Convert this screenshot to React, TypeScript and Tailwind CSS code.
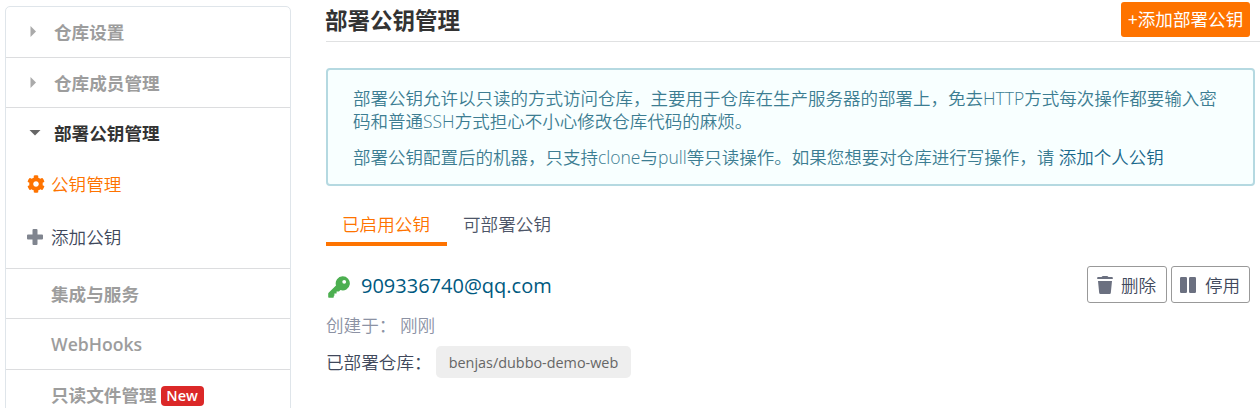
import type { ReactNode } from 'react';
import { FaCog } from 'react-icons/fa';

function KeyIcon() {
  return (
    <svg viewBox="0 0 22 22" className="h-[22px] w-[22px] shrink-0 fill-[#4caf50]">
      <path
        fillRule="evenodd"
        d="M14.6.2a7.100 7.100 0 1 1-2.200 13.800L11 15.400H8.600v2.200H6.400v2.200H5.800v1.200q0 .7-.7.7H.9a.7.7 0 0 1-.7-.7v-3.300c0-.4.1-.7.4-1l7.400-7.300A7.100 7.100 0 0 1 14.600.2ZM16.200 3.900a1.900 1.900 0 1 0 0 3.800 1.900 1.900 0 0 0 0-3.800Z"
      />
    </svg>
  );
}

function TrashIcon() {
  return (
    <svg viewBox="0 0 16 18" className="h-[18px] w-4 shrink-0 fill-[#6b7080]">
      <path d="M5.800 0h4.400q.5 0 .8.400l.4.600H15a.8.8 0 0 1 .8.8V3H.2V1.800A.8.8 0 0 1 1 1h3.600l.4-.6q.3-.4.8-.4ZM1 5h14l-1.200 12a1.200 1.200 0 0 1-1.200 1H3.400a1.200 1.200 0 0 1-1.200-1Z" />
    </svg>
  );
}

function PauseIcon() {
  return (
    <svg viewBox="0 0 16 16" className="h-4 w-4 shrink-0 fill-[#6b7080]">
      <rect x="0" y="0" width="7" height="16" rx="1.200" />
      <rect x="9" y="0" width="7" height="16" rx="1.200" />
    </svg>
  );
}

function PlusIcon() {
  return (
    <svg viewBox="0 0 16 16" className="mb-[2px] h-4 w-4 shrink-0 fill-[#80858f]">
      <path d="M6.500 0h3q1 0 1 1v4.500H15q1 0 1 1v3q0 1-1 1h-4.500V15q0 1-1 1h-3q-1 0-1-1v-4.500H1q-1 0-1-1v-3q0-1 1-1h4.500V1q0-1 1-1Z" />
    </svg>
  );
}

function Group({ label, open = false }: { label: string; open?: boolean }) {
  return (
    <div className={open ? 'flex h-[50px] items-center pl-[21px] font-semibold text-[#333]' : 'flex h-[50px] items-center pl-[21px] font-semibold text-[#9d9d9d]'}>
      <svg viewBox="0 0 12 12" className={open ? 'ml-[2px] mr-[13px] h-3 w-3 shrink-0' : 'mr-[15px] h-3 w-3 shrink-0'}>
        {open ? <path d="M.5 3h11L6 8.500Z" fill="#666" /> : <path d="M3.500 0v11L9 5.500Z" fill="#aaa" />}
      </svg>
      <span className="pt-px">{label}</span>
    </div>
  );
}

function Action({ icon, label, className }: { icon: ReactNode; label: string; className: string }) {
  return (
    <button className={`flex h-[37px] items-center rounded-[3px] border border-[#999] text-[#40485b] ${className}`}>
      {icon}
      <span className="pt-px">{label}</span>
    </button>
  );
}

export default function App() {
  return (
    <div className="flex h-[408px] overflow-hidden bg-white font-['Open_Sans','Noto_Sans_CJK_SC',sans-serif] text-[17.6px] leading-[23px]">
      <aside className="ml-[5px] mt-[6px] h-[420px] w-[286px] shrink-0 rounded-t-[5px] border border-[#dfe5ea]">
        <Group label="仓库设置" />
        <div className="h-[50px] border-t border-[#dcdddf]">
          <Group label="仓库成员管理" />
        </div>
        <div className="h-[161px] border-t border-[#dcdddf]">
          <Group label="部署公钥管理" open />
          <div className="flex h-[53px] items-center pl-[21px] font-[350] text-[#fe7300]">
            <FaCog className="mb-[2px] mr-[6px] h-[18px] w-[18px]" />
            公钥管理
          </div>
          <div className="flex h-[53px] items-center pl-[21px] font-[350] text-[#40485b]">
            <PlusIcon />
            <span className="ml-[8px]">添加公钥</span>
          </div>
        </div>
        <div className="flex h-[50px] items-center border-t border-[#dcdddf] pl-[45px] pt-px font-semibold text-[#9d9d9d]">集成与服务</div>
        <div className="flex h-[51px] items-center border-t border-[#dcdddf] pl-[45px] font-semibold text-[#9d9d9d]">WebHooks</div>
        <div className="flex h-[51px] items-center border-t border-[#dcdddf] pl-[45px] font-semibold text-[#9d9d9d]">
          只读文件管理
          <span className="ml-1 mt-px flex h-5 w-[43px] items-center justify-center rounded bg-[#db2828] text-[14.500px] text-white">New</span>
        </div>
      </aside>

      <main className="ml-[35px] min-w-0 flex-1">
        <header className="flex h-[42px] items-center justify-between border-b border-[#e0e1e2] pr-[10px]">
          <h1 className="ml-[-1px] text-[22.500px] font-bold text-[#333]">部署公钥管理</h1>
          <button className="mt-[-3px] h-[35px] w-[129px] whitespace-nowrap rounded-[3px] bg-[#fe7300] pt-px text-white">+添加部署公钥</button>
        </header>

        <section className="mr-[5px] mt-[26px] h-[118px] rounded-[4px] border-2 border-[#b5d9e1] bg-[#f8ffff] pl-[25px] pr-[33px] pt-[17px] text-[17.5px] font-[350] text-[#3c7d92]">
          <p className="whitespace-nowrap">
            部署公钥允许以只读的方式访问仓库，主要用于仓库在生产服务器的部署上，免去HTTP方式每次操作都要输入密
            <br />
            码和普通SSH方式担心不小心修改仓库代码的麻烦。
          </p>
          <p className="mt-[13px] whitespace-nowrap">
            部署公钥配置后的机器，只支持clone与pull等只读操作。如果您想要对仓库进行写操作，请 <a className="text-[#1a688b]">添加个人公钥</a>
          </p>
        </section>

        <nav className="mt-[20px] flex h-10 font-[350]">
          <a className="h-10 w-[121px] border-b-4 border-[#fe7300] pl-4 pt-[7px] text-[#fe7300]">已启用公钥</a>
          <a className="pl-4 pt-[7px] text-[#4d5568]">可部署公钥</a>
        </nav>

        <div className="mt-5 flex h-[37px] items-center pr-[10px] font-[350]">
          <span className="ml-[2px] mt-1"><KeyIcon /></span>
          <a className="ml-[11px] pt-px text-[20px] font-normal text-[#005980]">909336740@qq.com</a>
          <div className="ml-auto flex gap-1">
            <Action className="w-20 gap-2 pl-[9px]" icon={<TrashIcon />} label="删除" />
            <Action className="w-[79px] gap-[9px] pl-2" icon={<PauseIcon />} label="停用" />
          </div>
        </div>
        <div className="mt-[11px] flex font-[350] text-[#8c92a4]">
          <span className="w-[74px]">创建于：</span>刚刚
        </div>
        <div className="mt-[9px] flex h-8 items-center font-[350] text-[#40485b]">
          <span className="w-[110px] whitespace-nowrap">已部署仓库：</span>
          <span className="flex h-8 w-[195px] items-center justify-center rounded-[5px] bg-[#eee] text-[14.4px] font-normal text-[#666]">benjas/dubbo-demo-web</span>
        </div>
      </main>
    </div>
  );
}
